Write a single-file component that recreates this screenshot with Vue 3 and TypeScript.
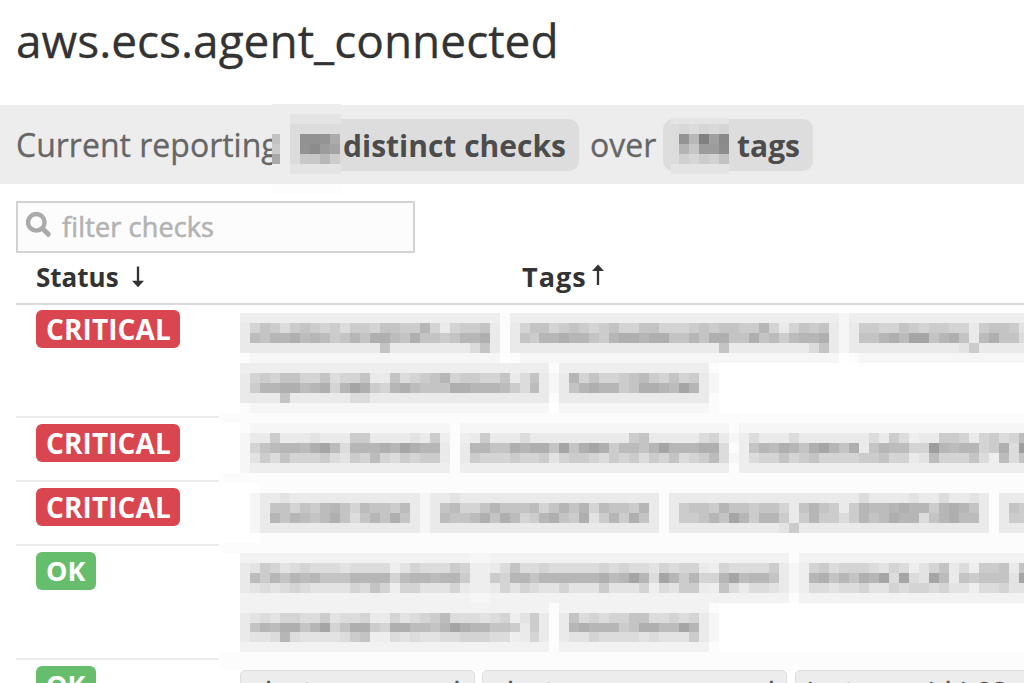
<template>
  <div class="check-view">
    <h1 class="title">aws.ecs.agent_connected</h1>

    <div class="summary">
      <span class="summary-text reporting">Current reporting</span>
      <span class="count checks-count">distinct checks</span>
      <span class="summary-text over">over</span>
      <span class="count tags-count">tags</span>
      <svg class="summary-mask" width="1024" height="90" shape-rendering="crispEdges">
        <rect
          v-for="(r, i) in summaryMask"
          :key="i"
          :x="r[0]"
          :y="r[1]"
          :width="r[2]"
          :height="r[3]"
          :fill="r[4]"
        />
      </svg>
    </div>

    <div class="filter">
      <svg class="search-icon" viewBox="0 0 26 26" width="26" height="26">
        <circle cx="10.3" cy="10.3" r="8.3" fill="none" stroke="#aaa" stroke-width="4.4" />
        <path d="M17 17L22.3 22.3" stroke="#aaa" stroke-width="5" stroke-linecap="round" />
      </svg>
      <span class="placeholder">filter checks</span>
    </div>

    <div class="table-head">
      <div class="head-status">
        <span>Status</span>
        <svg width="14" height="22" viewBox="0 0 14 22">
          <path d="M7 0.5V16" stroke="#333" stroke-width="2.3" />
          <path d="M1 14.8L7 21.2L13 14.8Z" fill="#333" />
        </svg>
      </div>
      <div class="head-tags">
        <span>Tags</span>
        <svg width="14" height="22" viewBox="0 0 14 22">
          <path d="M7 5V21" stroke="#333" stroke-width="2.3" />
          <path d="M1 7L7 0.4L13 7Z" fill="#333" />
        </svg>
      </div>
    </div>

    <div class="table-body">
      <div class="status-column">
        <div v-for="(check, i) in checks" :key="i" class="status-cell" :class="{ tall: check.tall }">
          <span class="status" :class="check.status.toLowerCase()">{{ check.status }}</span>
        </div>
      </div>
      <div class="tags-column">
        <svg class="mosaic" width="805" height="357" shape-rendering="crispEdges">
          <rect
            v-for="(r, i) in mosaic"
            :key="i"
            :x="r.x"
            :y="r.y"
            :width="r.w"
            :height="r.h"
            :fill="r.fill"
          />
        </svg>
        <div class="tag-row">
          <span class="tag first">cluster:ecs-prod</span>
          <span class="tag second">clustername:ecs-prod</span>
          <span class="tag third">instance_id:i-02a7</span>
        </div>
      </div>
    </div>
  </div>
</template>

<script setup lang="ts">
interface Check {
  status: string
  tall: boolean
}

const checks: Check[] = [
  { status: 'CRITICAL', tall: true },
  { status: 'CRITICAL', tall: false },
  { status: 'CRITICAL', tall: false },
  { status: 'OK', tall: true },
  { status: 'OK', tall: false }
]

// one character per cell, the shade is looked up in shades
const shades: Record<string, string> = {
  '1': '#fcfcfc',
  '2': '#f6f6f6',
  f: '#f2f2f2',
  '3': '#eeeeee',
  '4': '#eaeaea',
  '5': '#e3e3e3',
  '6': '#dcdcdc',
  '7': '#d4d4d4',
  '8': '#cccccc',
  '9': '#c4c4c4',
  a: '#bcbcbc',
  b: '#b6b6b6',
  c: '#afafaf',
  d: '#a5a5a5',
  e: '#9d9d9d'
}

const fill = (ch: string, n: number) => ch.repeat(n)

const rows: string[] = [
  '..' + fill('3', 26) + '1' + fill('3', 33) + '2' + fill('3', 18),
  '..' + '4798689878688799' + '88b747889' + '414' + '799789878977997778989988' + 'b7479894' + '24' + '88779878877489985',
  '..' + '4a9bbcaba89b9cca9c9989bbc' + '414' + '98bbcbb98bccbcc99b9cc99c' + '9a8abbc4' + '24' + '99bcadd9bc94ac996',
  '..' + fill('4', 14) + '9' + fill('4', 8) + '69' + '414' + fill('4', 20) + '9' + fill('4', 8) + '694' + '24' + fill('4', 10) + '58' + fill('4', 5),
  '..' + '1' + fill('2', 25) + '.1' + fill('2', 32) + '.1' + fill('2', 17),
  '..' + fill('3', 31) + '1' + fill('3', 15) + '1',
  '..' + '478799779677944967' + '89b78877' + '946942' + '4' + 'b79778' + '9a87978' + '42',
  '..' + '48bbccabc7bdc87bca999ccbb' + 'ba86a42' + '4' + '9bcbb89ccbadb' + '42',
  '..' + '44449444444664' + fill('4', 17) + '1' + fill('4', 15) + '1',
  '..' + '1' + fill('2', 30) + '.' + fill('2', 15) + '1',
  fill('1', 81),
  '..' + '1' + fill('2', 20) + '1' + fill('2', 27) + '1' + fill('2', 29),
  '..' + '244844454448844445483' + '1348' + '4446' + fill('4', 10) + '89' + '44444' + '674236' + '4446' + fill('4', 7) + '648634488747867a',
  '..' + '279abbacda6bbbcbdcbb4' + '14bb9' + '9cbcc9d9cdc8aa9bdbbbcc' + '6139' + 'bacb9cdb9c' + '49baa77ebabb78c6e',
  '..' + '2586977786587a7687884' + '1487' + '7787785788768786879678a' + '6236' + '7797897777' + '8897745a777963a69',
  '..' + '2' + fill('3', 20) + '1' + fill('3', 27) + '1' + fill('3', 29),
  fill('1', 81),
  '....' + fill('1', 77),
  '...' + '2445' + fill('4', 13) + '2445' + fill('4', 20) + '1' + fill('4', 19) + '644445446445' + '41444',
  '...' + '24' + '99798ab97a998a' + '424' + '9a779b999a79b9b7a998b' + '414' + '8998b9989974' + '9b984' + '8baabcbb8bcb9' + '41498',
  '...' + '24' + 'b9ba9ac969b9c9' + '424' + 'a99ac9ca78bc98c58b8c9' + '414' + '889b9db8bb84' + '8b886' + '8b9acbb69bcaa' + '41488',
  '...' + '2' + fill('4', 16) + '2' + fill('4', 23) + '1' + fill('4', 11) + '58' + fill('4', 19) + '1444',
  '....' + fill('1', 77),
  fill('1', 81),
  '..' + fill('f', 23) + '22' + fill('f', 30) + '1' + fill('f', 23),
  '..' + '4587567666566663576668733' + '4' + '69667666667676657677' + '43766668' + '423' + '7867776576357946388949',
  '..' + '4a8b9bab999bbbb7abbabb8338' + '7bb9bbbbbbcabdb6db8b' + '77bdabb9' + '423' + 'bc9b9cbd6d65da4989995d',
  '..' + '45656765555769737755574334' + '75765575558555736588' + '43964665' + '423' + '6656675576776755366755',
  '..' + fill('f', 23) + '22' + fill('f', 30) + '1' + fill('f', 23),
  '..' + fill('f', 31) + '1' + fill('f', 15) + '1',
  '..' + '456577668566744756' + '78a66656' + '735841' + '4' + '9676779966767' + '42',
  '..' + '49bacc9bd79cc87ccaa9bdcbb' + '9984841' + '4' + 'bcbbb89ccaadb' + '42',
  '..' + '4556b65555689336565566777' + '6634741' + '4' + '5576666565558' + '42',
  '..' + fill('f', 31) + '1' + fill('f', 15) + '1',
  fill('1', 81),
  fill('1', 81)
]

const pitch = 9.984

const mosaic = rows.flatMap((row, j) => {
  const y = Math.round(j * pitch)
  const h = Math.round((j + 1) * pitch) - y
  return [...row]
    .map((ch, i) => {
      const x = Math.round(i * pitch) + 1
      return { ch, x, y, w: Math.round((i + 1) * pitch) + 1 - x, h, fill: shades[ch] }
    })
    .filter((cell) => cell.ch !== '.')
})

type Block = [number, number, number, number, string]

const grid = (x: number, y: number, lines: string[]): Block[] =>
  lines.flatMap((line, j) =>
    line.split(' ').map((c, i): Block => [x + i * 10, y + j * 10, 10, 10, '#' + c + c + c])
  )

// y is counted from one pixel above the grey bar
const summaryMask: Block[] = [
  [272, 0, 69, 80, '#ededed'],
  [272, 80, 69, 10, '#fdfdfd'],
  [290, 10, 51, 60, '#e4e4e4'],
  [290, 20, 51, 40, '#dcdcdc'],
  [272, 30, 8, 10, '#c2c2c2'],
  [272, 40, 8, 10, '#cacaca'],
  [272, 50, 8, 10, '#a9a9a9'],
  ...grid(300, 30, ['92 92 94 ac', '92 8c 9c a4', 'c8 c8 b8 cc']),
  [671, 14, 58, 6, '#e4e4e4'],
  [671, 20, 58, 40, '#dcdcdc'],
  [671, 60, 58, 10, '#e4e4e4'],
  ...grid(679, 20, ['d8 dc d6 d9 d5', '94 b8 80 a0 8a', 'b4 c6 9c 9c 8c', 'd0 d6 cc d2 c2'])
]
</script>

<style>
body {
  overflow: hidden;
  background: #fff;
}
</style>

<style scoped>
.check-view {
  width: 1024px;
  height: 683px;
  overflow: hidden;
  background: #fff;
  color: #333;
  font-family: "Open Sans", "Noto Sans", sans-serif;
  white-space: nowrap;
}

.title {
  height: 105px;
  margin: 0;
  padding: 8px 0 0 16px;
  box-sizing: border-box;
  font-size: 46px;
  font-weight: 400;
  line-height: 64px;
  -webkit-text-stroke: 0.3px #333;
}

.summary {
  position: relative;
  display: flex;
  align-items: center;
  height: 79px;
  padding-left: 16px;
  background: #ededed;
  font-size: 32px;
}

.summary-text {
  color: #666;
  -webkit-text-stroke: 0.3px #666;
}

.reporting {
  width: 274px;
}

.over {
  width: 73px;
  padding-left: 11px;
}

.count {
  box-sizing: border-box;
  height: 52px;
  border-radius: 10px;
  background: #ddd;
  color: #4c4c4c;
  font-size: 30px;
  font-weight: 700;
  line-height: 53px;
}

.checks-count {
  width: 289px;
  padding-left: 53px;
}

.tags-count {
  width: 150px;
  padding-left: 74px;
}

.summary-mask {
  position: absolute;
  top: -1px;
  left: 0;
}

.filter {
  display: flex;
  align-items: center;
  box-sizing: border-box;
  width: 399px;
  height: 52px;
  margin: 17px 0 0 16px;
  padding-left: 8px;
  border: 2px solid #d3d3d3;
  background: #fcfcfc;
}

.search-icon {
  margin-top: -4px;
}

.placeholder {
  margin: -1px 0 0 10px;
  color: #b3b3b3;
  font-size: 27px;
  letter-spacing: 0.15px;
  -webkit-text-stroke: 0.6px #b3b3b3;
}

.table-head {
  display: flex;
  box-sizing: border-box;
  height: 52px;
  margin-left: 16px;
  padding-left: 20px;
  border-bottom: 2px solid #dadada;
  font-size: 26px;
  font-weight: 700;
  line-height: 48px;
}

.head-status,
.head-tags {
  display: flex;
}

.head-status {
  width: 486px;
}

.head-status svg {
  margin: 13px 0 0 12px;
}

.head-tags {
  font-size: 27px;
  letter-spacing: 1px;
}

.head-tags svg {
  margin: 11px 0 0 4px;
}

.table-body {
  display: flex;
  margin-top: -1px;
  padding-left: 16px;
}

.status-column {
  flex: none;
  width: 203px;
}

.status-cell {
  box-sizing: border-box;
  height: 64px;
  padding: 6px 0 0 20px;
  border-bottom: 2px solid #ececec;
}

.status-cell.tall {
  height: 114px;
}

.status {
  display: inline-block;
  height: 38px;
  padding: 0 10px;
  border-radius: 6px;
  color: #fff;
  font-size: 27px;
  font-weight: 700;
  line-height: 38px;
  vertical-align: top;
}

.status.critical {
  width: 124px;
  background: #d9464f;
  font-size: 28px;
  letter-spacing: 0.1px;
}

.status.ok {
  width: 40px;
  background: #66be6c;
}

.tags-column {
  width: 805px;
  padding-top: 9px;
}

.mosaic {
  display: block;
}

.tag-row {
  display: flex;
  height: 60px;
  margin-left: 21px;
}

.tag {
  flex: none;
  box-sizing: border-box;
  height: 42px;
  padding-left: 11px;
  border: 1px solid #dedede;
  border-radius: 5px;
  background: #ededed;
  color: #555;
  font-size: 26px;
  letter-spacing: 0.9px;
  line-height: 39px;
  -webkit-text-stroke: 0.6px #555;
}

.first {
  width: 235px;
}

.second {
  width: 305px;
  margin-left: 7px;
}

.third {
  width: 300px;
  margin-left: 8px;
}
</style>
